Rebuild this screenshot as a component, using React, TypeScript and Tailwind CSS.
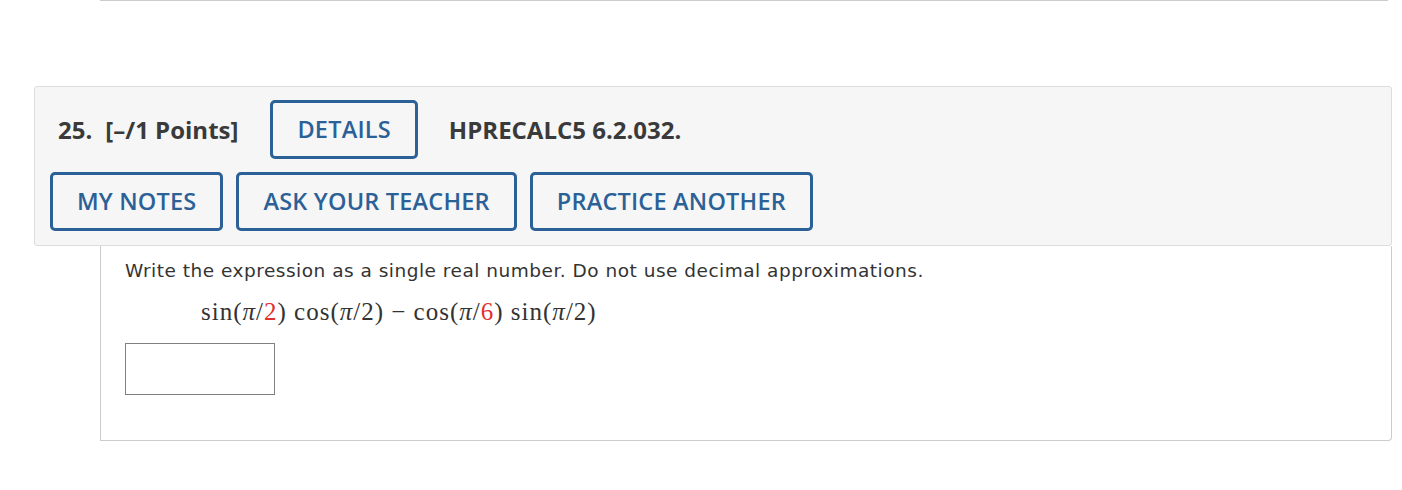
import {JSX} from "react";

function OutlineButton({label}: {label: string}): JSX.Element {
    return (
        <button className="h-[59px] px-[24px] border-[3px] border-[#2b6196] rounded-[5px] text-[#2b6196] text-[23.5px] font-semibold tracking-[0.2px] leading-none">
            {label}
        </button>
    );
}

function Pi(): JSX.Element {
    return <span className="italic">π</span>;
}

export default function App(): JSX.Element {
    return (
        <div className="w-[1402px] h-[490px] bg-white font-['Open_Sans',sans-serif]">
            <div className="ml-[100px] w-[1288px] h-px bg-[#cccccc]"/>

            <div className="mt-[85px] ml-[34px] w-[1358px] bg-[#f6f6f6] border border-[#dddddd] rounded-[3px] pt-[13px] pb-[14px] px-[15px]">
                <div className="flex flex-row items-center pl-[8px]">
                    <span className="text-[24px] font-bold text-[#3a3a3a]">25.</span>
                    <span className="ml-[13px] text-[24px] font-bold text-[#3a3a3a]">[–/1 Points]</span>
                    <div className="ml-[32px]">
                        <OutlineButton label="DETAILS"/>
                    </div>
                    <span className="ml-[31px] text-[24px] font-bold text-[#3a3a3a]">HPRECALC5 6.2.032.</span>
                </div>
                <div className="flex flex-row gap-[13px] mt-[13px]">
                    <OutlineButton label="MY NOTES"/>
                    <OutlineButton label="ASK YOUR TEACHER"/>
                    <OutlineButton label="PRACTICE ANOTHER"/>
                </div>
            </div>

            <div className="ml-[100px] w-[1292px] h-[195px] border-x border-b border-[#cccccc] rounded-br-[4px] pl-[24px] pt-[13px]">
                <p className="font-['DejaVu_Sans',sans-serif] text-[18.5px] tracking-[0.5px] text-[#333333] leading-[24px]">
                    Write the expression as a single real number. Do not use decimal approximations.
                </p>
                <div className="ml-[76px] mt-[14px] font-['Liberation_Serif',serif] text-[25px] tracking-[1px] text-[#333333] leading-[30px] whitespace-nowrap">
                    sin(<Pi/>/<span className="text-[#e0312f]">2</span>) cos(<Pi/>/2) − cos(<Pi/>/<span className="text-[#e0312f]">6</span>) sin(<Pi/>/2)
                </div>
                <input type="text" className="mt-[16px] w-[150px] h-[52px] border border-[#808080] bg-white outline-none"/>
            </div>
        </div>
    );
}
